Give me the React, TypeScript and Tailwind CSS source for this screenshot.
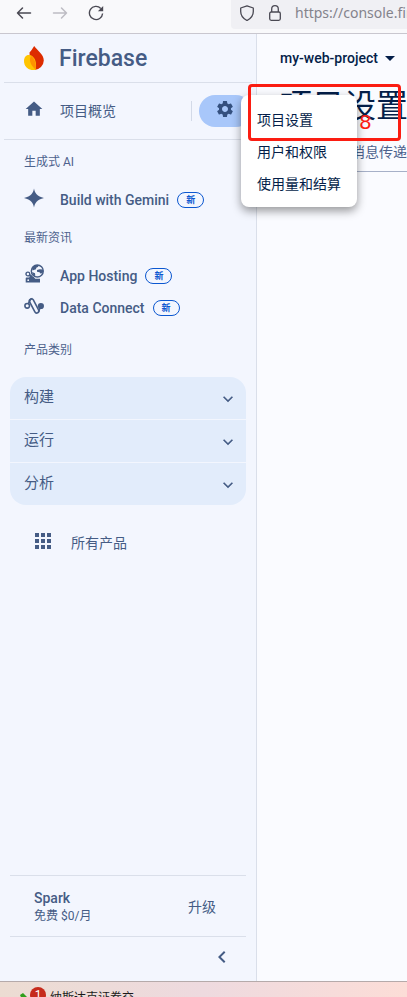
import type { ReactNode } from "react";
import { MdApps, MdChevronLeft, MdExpandMore, MdHome, MdSettings } from "react-icons/md";

const FONT = "font-[Roboto,'Noto_Sans_CJK_SC',sans-serif]";

function BrowserBar() {
  return (
    <header className="flex h-[34px] shrink-0 items-start justify-between overflow-hidden border-b border-[#c9c7cf] bg-[#f9f9fb] pl-4">
      <div className="flex items-center gap-5 pt-[5px]">
        <button type="button" aria-label="后退" className="text-[#4a4953]">
          <svg className="block size-4" viewBox="0 0 16 16" fill="none" stroke="currentColor" strokeWidth="1.5" strokeLinecap="round" strokeLinejoin="round">
            <path d="M14.5 8H1.5M6.5 3L1.5 8l5 5" />
          </svg>
        </button>
        <button type="button" aria-label="前进" className="text-[#bdbcc3]">
          <svg className="block size-4" viewBox="0 0 16 16" fill="none" stroke="currentColor" strokeWidth="1.5" strokeLinecap="round" strokeLinejoin="round">
            <path d="M1.5 8h13M9.5 3l5 5-5 5" />
          </svg>
        </button>
        <button type="button" aria-label="重新加载" className="text-[#4a4953]">
          <svg className="block size-4" viewBox="0 0 16 16" fill="none" stroke="currentColor" strokeWidth="1.4">
            <path d="M14.6 8.5A6.6 6.6 0 1 1 12.8 3.4" />
            <path d="M15.2 1v5.3H9.9z" fill="currentColor" stroke="none" />
          </svg>
        </button>
      </div>
      <div className="flex h-[29px] w-44 items-center gap-3 overflow-hidden rounded-bl bg-[#f0f0f4] pb-[3px] pl-2 text-[#4a4953]">
        <svg className="block size-4 shrink-0" viewBox="0 0 16 16" fill="none" stroke="currentColor" strokeWidth="1.3" strokeLinejoin="round">
          <path d="M8 .8L14.3 3v3.5c0 4-2.3 7-6.3 9-4-2-6.3-5-6.3-9V3z" />
        </svg>
        <svg className="block size-4 shrink-0" viewBox="0 0 16 16" fill="none" stroke="currentColor" strokeWidth="1.3">
          <rect x="2.7" y="7" width="10.6" height="8.3" rx="1.5" />
          <path d="M4.7 7V4a3.3 3.3 0 0 1 6.6 0v3" />
        </svg>
        <span className="font-['Noto_Sans',sans-serif] text-sm whitespace-nowrap text-[#84838c]">https://console.firebase.google.com</span>
      </div>
    </header>
  );
}

function FirebaseLogo() {
  return (
    <svg className="block h-6 w-5 shrink-0" viewBox="0 0 20 24">
      <path d="M4.3 20.5C2 16 6.5 11 5.5 6.5 7.5 4.5 8.5 2.5 10.2 0c2.6 4.2 9.600 8 9.600 14.500A9.800 9.800 0 0 1 10.500 24z" fill="#dd2c00" />
      <path d="M5 9C2 8.800 0 11.500 0 15c0 5.500 4.300 9.200 9.500 9.200 1 0 1.800-.2 2.200-.5C13 17 11 9.500 5 9z" fill="#ffc400" />
      <path d="M7 9.800C5.200 12.500 5 18 11.700 23.700 12.500 18 10.700 12.200 7 9.800z" fill="#ff9100" />
    </svg>
  );
}

function GeminiIcon() {
  return (
    <svg className="block size-5" viewBox="0 0 20 20" fill="currentColor">
      <path d="M10 .5c.5 2.500 1.200 4.200 2.600 5.800 1.700 1.900 3.900 2.900 7.400 3.700-3.500.8-5.700 1.800-7.400 3.700-1.400 1.600-2.100 3.300-2.600 5.800-.5-2.500-1.200-4.200-2.600-5.800C5.700 11.800 3.500 10.800 0 10c3.500-.8 5.700-1.800 7.400-3.700C8.800 4.700 9.500 3 10 .5z" />
    </svg>
  );
}

function HostingIcon() {
  return (
    <svg className="block size-5" viewBox="0 0 20 20">
      <path d="M1.700 18.500v-4.100c0-.6.400-1 1-1h2.500l1-3h2l3 4.300H16v3.800z" fill="currentColor" />
      <circle cx="3.900" cy="10" r="1.900" fill="none" stroke="currentColor" strokeWidth="1.400" />
      <circle cx="4.200" cy="16.200" r=".9" fill="#f3f6fe" />
      <circle cx="13.300" cy="7" r="7.100" fill="#f3f6fe" />
      <circle cx="13.300" cy="7" r="6" fill="none" stroke="currentColor" strokeWidth="1.400" />
      <path d="M8 4l2.500-2.500 3.500-.5.300 1.700-2 1-.3 1.600-1.500.4-2 .8zM13 6l2.800-.8L19 5.500v3l-2.200 1.200-1.300-1.500-2.500-.5zM8 8l3 1.200.3 2.500-1.500.3z" fill="currentColor" />
    </svg>
  );
}

function DataConnectIcon() {
  return (
    <svg className="block size-5" viewBox="0 0 20 20" fill="none" stroke="currentColor" strokeWidth="1.6">
      <circle cx="3.200" cy="9.800" r="2.300" />
      <circle cx="16.900" cy="10" r="3.100" fill="currentColor" stroke="none" />
      <rect x="8" y="2.200" width="4.200" height="15.400" rx="2.100" transform="rotate(-28 10.1 9.900)" />
      <path d="M4.300 7.800L5.800 4.600Q6.500 2.800 8.300 2.500M14.600 15.600L16 12" />
    </svg>
  );
}

function SectionLabel({ children }: { children: ReactNode }) {
  return <h2 className="pl-6 text-xs leading-5 font-normal text-[#4d628d]">{children}</h2>;
}

function NavItem({ icon, label }: { icon: ReactNode; label: string }) {
  return (
    <a href="#" className="flex h-8 items-center pl-6">
      <span className="mr-4 pb-1">{icon}</span>
      <span className="text-sm font-medium whitespace-nowrap">{label}</span>
      <span className="ml-2 flex h-4 w-[27px] items-center justify-center rounded-full border border-[#0b57d0] text-[9px] leading-none font-bold text-[#0b57d0]">
        新
      </span>
    </a>
  );
}

function Sidebar() {
  return (
    <nav className="flex w-[257px] shrink-0 flex-col border-r border-[#dadfea] bg-[#f3f6fe] text-[#455c85]">
      <div className="mr-1 ml-1 flex h-[49px] items-center gap-[15px] border-b border-[#dadfea] pl-5">
        <FirebaseLogo />
        <span className="pt-0.5 text-[23px] leading-8 font-medium">Firebase</span>
      </div>
      <div className="mr-1 ml-1 flex h-[57px] items-center border-b border-[#dadfea] pl-5">
        <a href="#" className="flex flex-1 items-center gap-4 text-sm">
          <span className="pb-1">
            <MdHome className="block size-5" />
          </span>
          项目概览
        </a>
        <span className="h-5 w-px bg-[#d3dae8]" />
        <button type="button" aria-label="设置" className="ml-[7px] flex h-8 w-[53px] items-center rounded-full bg-[#a8c7fa] pb-1 pl-4 text-[#34507f]">
          <MdSettings className="block size-5" />
        </button>
      </div>

      <div className="flex flex-col gap-3 pt-3 pb-4">
        <div className="flex flex-col gap-3">
          <SectionLabel>生成式 AI</SectionLabel>
          <NavItem icon={<GeminiIcon />} label="Build with Gemini" />
        </div>
        <div>
          <SectionLabel>最新资讯</SectionLabel>
          <div className="pt-3">
            <NavItem icon={<HostingIcon />} label="App Hosting" />
            <NavItem icon={<DataConnectIcon />} label="Data Connect" />
          </div>
        </div>
      </div>
      <SectionLabel>产品类别</SectionLabel>

      <div className="mx-2.5 mt-[17px] flex flex-col gap-px overflow-hidden rounded-2xl">
        {["构建", "运行", "分析"].map((name) => (
          <button key={name} type="button" className="flex h-[42px] items-center justify-between bg-[#e2ecfb] pt-0.5 pr-2 pl-3.5 text-[15px] leading-6">
            <span className="pb-1">{name}</span>
            <MdExpandMore className="block size-5" />
          </button>
        ))}
      </div>

      <a href="#" className="mt-5 flex h-9 items-center gap-4 pl-[31px] text-sm">
        <span className="pb-1">
          <MdApps className="block size-6" />
        </span>
        所有产品
      </a>

      <div className="mx-2.5 mt-auto flex h-[61px] items-center justify-between border-t border-[#dadfea] pt-0.5 pr-4 pl-6">
        <div>
          <div className="text-sm leading-[18px] font-medium">Spark</div>
          <div className="text-xs leading-[18px]">免费 $0/月</div>
        </div>
        <button type="button" className="px-3.5 text-sm">升级</button>
      </div>
      <div className="mx-2.5 flex h-[45px] items-center justify-end border-t border-[#dadfea] pr-3 pb-1">
        <button type="button" aria-label="收起">
          <MdChevronLeft className="block size-6" />
        </button>
      </div>
    </nav>
  );
}

function SettingsMenu() {
  return (
    <div role="menu" className="absolute top-[95px] left-[241px] z-10 w-[116px] rounded-lg bg-white pt-[9px] pb-[7px] shadow-[0_4px_10px_rgba(0,0,0,0.4)]">
      {["项目设置", "用户和权限", "使用量和结算"].map((item) => (
        <a key={item} href="#" role="menuitem" className="flex h-8 items-center pl-4 text-sm whitespace-nowrap text-[#041e49]">
          {item}
        </a>
      ))}
    </div>
  );
}

function Content() {
  return (
    <main className="min-w-0 flex-1 overflow-hidden bg-[#fafbff]">
      <div className="flex h-12 items-center pl-[23px]">
        <button type="button" className="flex items-center gap-[7px] text-sm font-medium text-[#041e49]">
          my-web-project
          <svg className="block h-[5px] w-2.5" viewBox="0 0 10 5">
            <path d="M0 0h10L5 5z" fill="currentColor" />
          </svg>
        </button>
      </div>
      <h1 className="pl-[23px] text-[32px] leading-[48px] whitespace-nowrap text-[#041e49]">项目设置</h1>
      <div className="flex h-[42px] items-center border-b border-[#a6b0c8] pt-0.5 pl-[30px] text-sm whitespace-nowrap text-[#4d628d]">
        <a href="#" className="w-14">常规</a>
        <a href="#">云消息传递</a>
      </div>
    </main>
  );
}

function Taskbar() {
  return (
    <footer className="flex h-4 shrink-0 items-start overflow-hidden border-t border-[#b5aaaa] bg-linear-to-r from-[#ecdcd2] via-[#eedadf] to-[#fcddd7] pl-5">
      <svg className="mt-2.5 block h-3 w-2.5 shrink-0" viewBox="0 0 10 12">
        <path d="M0 3L3 1l6 6-5 5z" fill="#2f9e1b" />
      </svg>
      <span className="mt-[5px] flex size-4 shrink-0 items-center justify-center rounded-full bg-[#c62a1c] text-xs text-white">1</span>
      <span className="ml-1 pt-1.5 font-['Noto_Sans_CJK_SC',sans-serif] text-xs leading-[18px] whitespace-nowrap text-[#1c1a1a]">纳斯达克证券交</span>
    </footer>
  );
}

export default function App() {
  return (
    <div className={`relative flex h-screen flex-col overflow-hidden bg-[#fafbff] ${FONT}`}>
      <BrowserBar />
      <div className="flex min-h-0 flex-1">
        <Sidebar />
        <Content />
      </div>
      <Taskbar />
      <SettingsMenu />
      <div className="pointer-events-none absolute top-[84px] left-[248px] z-20 h-[57px] w-[153px] rounded-sm border-3 border-[#fb1d12]" />
      <span className="pointer-events-none absolute top-[112px] left-[359px] z-20 font-['DejaVu_Sans',sans-serif] text-xl leading-5 text-[#fb1d12]">8</span>
    </div>
  );
}
